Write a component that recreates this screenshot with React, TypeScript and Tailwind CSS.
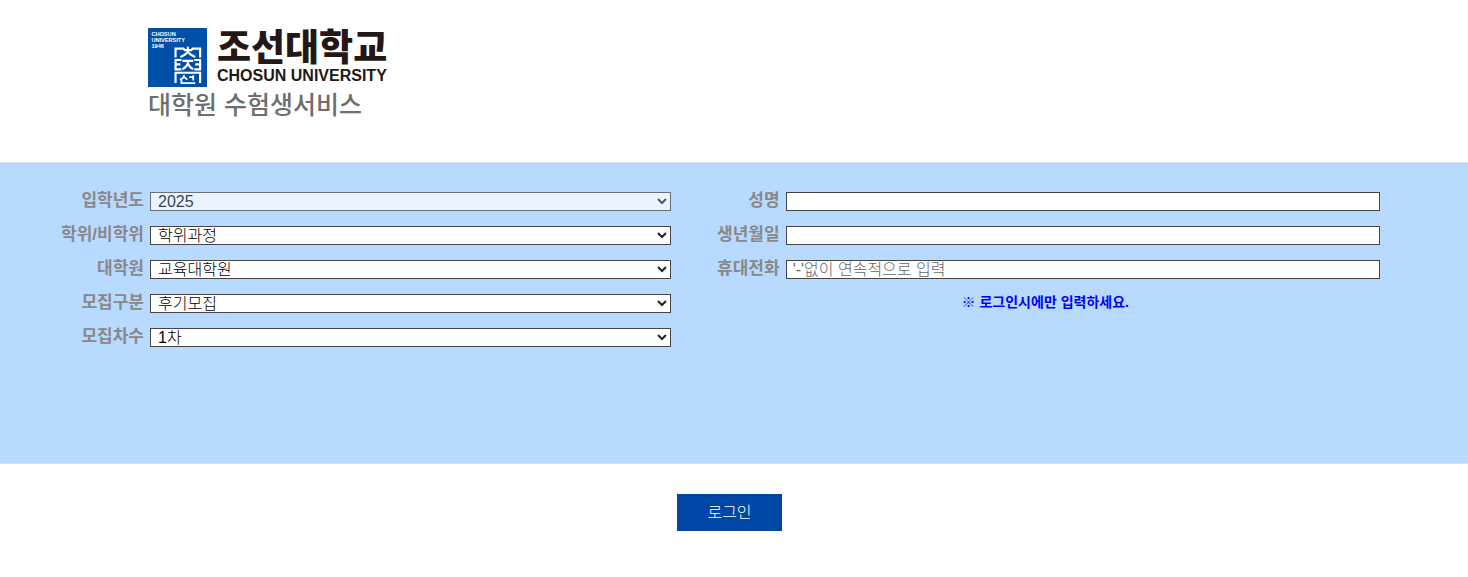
import type { InputHTMLAttributes, ReactNode } from 'react';

const selects = [
  { id: 'year', label: '입학년도', value: '2025', disabled: true },
  { id: 'degree', label: '학위/비학위', value: '학위과정' },
  { id: 'school', label: '대학원', value: '교육대학원' },
  { id: 'term', label: '모집구분', value: '후기모집' },
  { id: 'round', label: '모집차수', value: '1차' },
];

const inputs: (InputHTMLAttributes<HTMLInputElement> & { id: string; label: string })[] = [
  { id: 'name', label: '성명' },
  { id: 'birth', label: '생년월일' },
  { id: 'phone', label: '휴대전화', type: 'tel', placeholder: "'-'없이 연속적으로 입력" },
];

function Emblem() {
  return (
    <svg viewBox="0 0 60 60" className="h-[59px] w-[59px] shrink-0" aria-hidden="true">
      <rect width="60" height="60" fill="#0050a8" />
      <g fill="#fff" className="font-['Liberation_Sans'] text-[5.7px] font-bold">
        <text x="3.500" y="8">CHOSUN</text>
        <text x="3.500" y="14">UNIVERSITY</text>
        <text x="3.500" y="20">1946</text>
      </g>
      <g fill="none" stroke="#fff" strokeWidth="2.2">
        <path d="M28 30V21H36L37.500 22.500H44L45.500 21H53V30" />
        <path d="M40.500 19V24Q39 27 33 29.500M40.500 24Q42 27 48 29.500" />
        <path d="M34 32.500H28V42H34M28 37H33M47 32.500H53V42H47M53 37H48" />
        <path d="M35 33.500H46M40.500 33.500V36Q39 40 35 42M40.500 36Q42 40 46 42" />
        <path d="M28 56V45.500H53V56" />
        <path d="M36.500 48Q37 51 32.500 52.500M37 50L40 52.500M42 50H46M46 48V53.500M34 53V56H48" strokeWidth="1.800" />
      </g>
    </svg>
  );
}

function Field({ id, label, labelWidth, children }: { id: string; label: string; labelWidth: string; children: ReactNode }) {
  return (
    <div className="flex h-[34px] items-start">
      <label
        htmlFor={id}
        className={`${labelWidth} shrink-0 pr-[6px] text-right text-[17px] leading-[18px] font-bold text-[#888]`}
      >
        {label}
      </label>
      {children}
    </div>
  );
}

export default function App() {
  return (
    <div className="bg-white font-['Liberation_Sans','Noto_Sans_CJK_KR',sans-serif] text-[#222]">
      <header className="h-[162px] pt-7 pl-[148px]">
        <div className="flex gap-[10px]">
          <Emblem />
          <div className="text-[#231815]">
            <div className="text-[37px] leading-[42px] font-black">조선대학교</div>
            <div className="text-base leading-3 font-bold">CHOSUN UNIVERSITY</div>
          </div>
        </div>
        <h1 className="text-[25px] leading-9 font-medium text-[#6e6e6e]">대학원 수험생서비스</h1>
      </header>

      <form onSubmit={(e) => e.preventDefault()}>
        <div className="flex min-h-[302px] border-y border-[#d9e2ec] bg-[#b8daff] pt-[29px] pr-[6%]">
          <div className="w-[48.6%] shrink-0">
            {selects.map((s) => (
              <Field key={s.id} id={s.id} label={s.label} labelWidth="w-[150px]">
                <div className={`relative min-w-0 flex-1 ${s.disabled ? 'opacity-70' : ''}`}>
                  <select
                    id={s.id}
                    disabled={s.disabled}
                    className="block h-[19px] w-full appearance-none border border-[#444] bg-white pl-[7px] text-base leading-4 font-light text-black"
                  >
                    <option>{s.value}</option>
                  </select>
                  <svg viewBox="0 0 10 7" className="pointer-events-none absolute top-[6px] right-1 h-[7px] w-[10px]" aria-hidden="true">
                    <path d="M1 1L5 5L9 1" fill="none" stroke="#222" strokeWidth="2" />
                  </svg>
                </div>
              </Field>
            ))}
          </div>

          <div className="min-w-0 flex-1">
            {inputs.map(({ label, ...rest }) => (
              <Field key={rest.id} id={rest.id} label={label} labelWidth="w-[115px]">
                <input
                  {...rest}
                  className="h-[19px] min-w-0 flex-1 border border-[#444] bg-white px-[6px] text-base leading-4 font-light placeholder:text-[#666]"
                />
              </Field>
            ))}
            <p className="pl-10 text-center text-sm leading-4 font-bold text-[#0000ff]">※ 로그인시에만 입력하세요.</p>
          </div>
        </div>

        <div className="flex justify-center pt-[30px] pr-[9px]">
          <button type="submit" className="h-[37px] w-[105px] bg-[#0046a5] text-base font-light text-white">
            로그인
          </button>
        </div>
      </form>
    </div>
  );
}
